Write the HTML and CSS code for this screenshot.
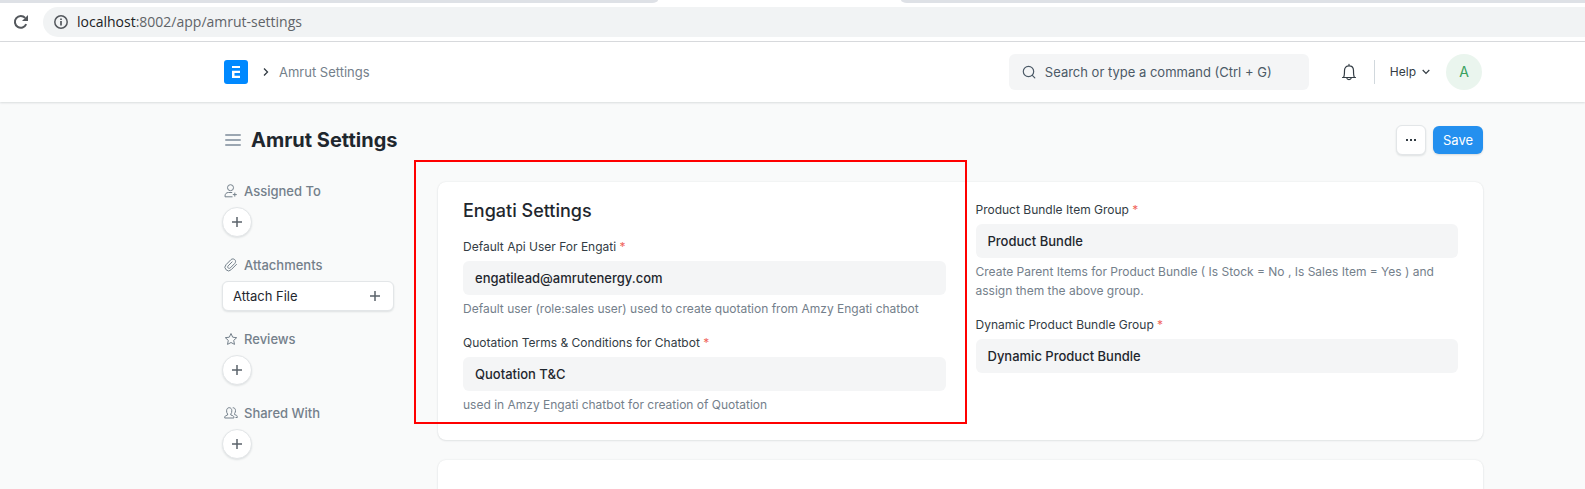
FILE: index.html
```html
<!DOCTYPE html>
<html lang="en">
<head>
<meta charset="utf-8">
<title>Amrut Settings</title>
<link rel="stylesheet" href="styles.css">
</head>
<body>
<div class="browser">
  <div class="tabs"><div class="tab-left"></div><div class="tab-right"></div></div>
  <div class="toolbar">
    <button class="reload" aria-label="Reload">
      <svg width="16" height="16" viewBox="0 0 16 16" fill="none"><path d="M13.2 10.2A5.9 5.9 0 1 1 12.2 3.9" stroke="#54585d" stroke-width="2"/><path d="M15 1v6H9z" fill="#54585d"/></svg>
    </button>
    <div class="address">
      <svg width="14" height="14" viewBox="0 0 14 14" fill="none" stroke="#54585d"><circle cx="7" cy="7" r="6.2" stroke-width="1.5"/><path d="M7 6v4.4M7 3.4v1.6" stroke-width="1.7"/></svg>
      <span class="url"><span class="host">localhost</span>:8002/app/amrut-settings</span>
    </div>
  </div>
</div>

<header class="navbar">
  <a class="logo" href="#" aria-label="Home">
    <svg width="24" height="24" viewBox="0 0 24 24"><rect width="24" height="24" rx="3" fill="#0089ff"/><path d="M8 6h8v2H8zM8 10.800h8v2.200h-5.500v2.800H16V18H8z" fill="#fff"/></svg>
  </a>
  <nav class="crumbs">
    <svg width="6" height="10" viewBox="0 0 6 10" fill="none"><path d="M1 1.500 4.500 5 1 8.500" stroke="#333c44" stroke-width="1.300"/></svg>
    <a href="#">Amrut Settings</a>
  </nav>
  <label class="search">
    <svg width="14" height="14" viewBox="0 0 14 14" fill="none" stroke="#4c5a67" stroke-width="1.200" stroke-linecap="round"><circle cx="6.500" cy="6.500" r="5.200"/><path d="m10.300 10.300 2.500 2.500"/></svg>
    <input type="text" aria-label="Search" placeholder="Search or type a command (Ctrl + G)">
  </label>
  <button class="bell" aria-label="Notifications">
    <svg width="16" height="18" viewBox="0 0 16 18" fill="none" stroke="#333c44" stroke-width="1.200" stroke-linecap="round" stroke-linejoin="round"><path d="M1.500 14.500h13M2.600 14.300c.8-1.300.9-2.500.9-6.800C3.500 4.600 5.300 2.800 8 2.800s4.500 1.800 4.500 4.700c0 4.300.1 5.500.9 6.800M8 2.600V1.400M5.600 14.700c.3 1.300 1.200 2 2.400 2s2.100-.7 2.400-2"/></svg>
  </button>
  <button class="help">Help
    <svg width="8" height="6" viewBox="0 0 8 6" fill="none"><path d="M.7 1 4 4.300 7.300 1" stroke="#333c44" stroke-width="1.200"/></svg>
  </button>
  <button class="avatar">A</button>
</header>

<div class="page">
  <div class="page-head">
    <button class="menu" aria-label="Toggle sidebar">
      <svg width="16" height="12" viewBox="0 0 16 12" stroke="#9ba6b1" stroke-width="2" stroke-linecap="round"><path d="M1 1h14M1 6h14M1 11h14"/></svg>
    </button>
    <h1>Amrut Settings</h1>
    <button class="more" aria-label="More">
      <svg width="12" height="4" viewBox="0 0 12 4" fill="#333c44"><rect x="1" y="1" width="2" height="2"/><rect x="5" y="1" width="2" height="2"/><rect x="9" y="1" width="2" height="2"/></svg>
    </button>
    <button class="save">Save</button>
  </div>

  <div class="layout">
    <aside class="sidebar">
      <section class="group">
        <h2><svg width="14" height="14" viewBox="0 0 14 14" fill="none" stroke="#74808b"><circle cx="6.500" cy="3.700" r="3"/><path d="M8.200 8.500H4.500C2.200 8.500 1 10 1 12.200v.6h7.500M10.800 8.600v4M8.800 10.600h4"/></svg>Assigned To</h2>
        <button class="round" aria-label="Assign"><svg width="10" height="10" viewBox="0 0 10 10" stroke="#5b636b" stroke-width="1.500"><path d="M5 0v10M0 5h10"/></svg></button>
      </section>
      <section class="group">
        <h2><svg width="14" height="14" viewBox="0 0 14 14" fill="none" stroke="#74808b" stroke-linecap="round"><path d="m12.500 6.400-5.300 5.300a3.500 3.500 0 0 1-5.200-5l4.800-4.900c2.700-2.500 6.400.8 4 3.600L6.300 9.900c-1.500 1.400-3.500-.5-2.200-2l4-4"/></svg>Attachments</h2>
        <button class="attach">Attach File<svg width="10" height="10" viewBox="0 0 10 10" stroke="#5b636b" stroke-width="1.500"><path d="M5 0v10M0 5h10"/></svg></button>
      </section>
      <section class="group">
        <h2><svg width="14" height="14" viewBox="0 0 14 14" fill="none" stroke="#74808b" stroke-linejoin="round"><path d="m7 1.500 1.700 3.700 4 .5-3 2.700.8 4L7 10.500l-3.500 1.900.8-4-3-2.700 4-.5z"/></svg>Reviews</h2>
        <button class="round" aria-label="Add review"><svg width="10" height="10" viewBox="0 0 10 10" stroke="#5b636b" stroke-width="1.500"><path d="M5 0v10M0 5h10"/></svg></button>
      </section>
      <section class="group">
        <h2><svg width="14" height="14" viewBox="0 0 14 14" fill="none" stroke="#74808b" stroke-linejoin="round"><path d="M3.600 8c-.8-.8-1-1.900-1-3.200 0-1.900 1-3.100 2.600-3.100s2.600 1.200 2.600 3.100c0 1.300-.2 2.400-1 3.200v1l2 .7c.9.400 1.100 1 1.100 2.300H.7c0-1.300.2-1.900 1.100-2.300l1.800-.7zM8.700 1.800c1.600-.3 2.800.9 2.800 2.800 0 1.200-.2 2-.9 2.800v1.200l1.600.6c.9.300 1.100 1 1.100 2.300h-1.800"/></svg>Shared With</h2>
        <button class="round" aria-label="Share"><svg width="10" height="10" viewBox="0 0 10 10" stroke="#5b636b" stroke-width="1.500"><path d="M5 0v10M0 5h10"/></svg></button>
      </section>
    </aside>

    <main class="main">
      <form class="card">
        <div class="column marked">
          <h3>Engati Settings</h3>
          <div class="field">
            <label for="api-user">Default Api User For Engati <span class="req">*</span></label>
            <input id="api-user" type="text" value="engatilead@amrutenergy.com">
            <p>Default user (role:sales user) used to create quotation from Amzy Engati chatbot</p>
          </div>
          <div class="field">
            <label for="terms">Quotation Terms &amp; Conditions for Chatbot <span class="req">*</span></label>
            <input id="terms" type="text" value="Quotation T&amp;C">
            <p>used in Amzy Engati chatbot for creation of Quotation</p>
          </div>
        </div>
        <div class="column side">
          <div class="field">
            <label for="item-group">Product Bundle Item Group <span class="req">*</span></label>
            <input id="item-group" type="text" value="Product Bundle">
            <p>Create Parent Items for Product Bundle ( Is Stock = No , Is Sales Item = Yes ) and assign them the above group.</p>
          </div>
          <div class="field">
            <label for="dynamic-group">Dynamic Product Bundle Group <span class="req">*</span></label>
            <input id="dynamic-group" type="text" value="Dynamic Product Bundle">
          </div>
        </div>
      </form>
      <div class="card next"></div>
    </main>
  </div>
</div>
</body>
</html>
```
FILE: styles.css
```css
* { box-sizing: border-box; }
html { height: 100%; }
body {
  margin: 0;
  min-height: 100%;
  display: flex;
  flex-direction: column;
  background: #f9fafa;
  color: #1f272e;
  font: 13px/20px Inter, "Liberation Sans", sans-serif;
}
h1, h2, h3, p { margin: 0; }
svg { display: block; flex: none; }
button {
  display: flex;
  align-items: center;
  justify-content: center;
  padding: 0;
  border: 0;
  background: none;
  color: inherit;
  font: inherit;
}
input { font: inherit; color: inherit; border: 0; outline: 0; }
a { color: inherit; text-decoration: none; }

.browser { flex: none; background: #fff; border-bottom: 1px solid #d9dbde; }
.tabs { display: flex; justify-content: space-between; height: 3px; }
.tab-left, .tab-right { background: #dee1e6; }
.tab-left { flex: 0 0 658px; border-bottom-right-radius: 6px 3px; }
.tab-right { flex: 0 1 684px; border-bottom-left-radius: 6px 3px; }
.toolbar { display: flex; align-items: center; padding: 4px 0 4px 13px; gap: 14px; }
.address {
  flex: 1;
  display: flex;
  align-items: center;
  gap: 9px;
  height: 30px;
  padding-left: 11px;
  border-radius: 15px 0 0 15px;
  background: #f1f3f4;
}
.url { font-family: "Open Sans", "Noto Sans", sans-serif; font-size: 14px; color: #5f6368; }
.host { color: #202124; }

.navbar {
  flex: none;
  display: flex;
  align-items: center;
  height: 60px;
  padding: 0 103px 0 224px;
  background: #fff;
  box-shadow: 0 1px 2px rgba(25, 39, 52, .14);
  z-index: 1;
}
.crumbs { display: flex; align-items: center; gap: 10px; margin: 0 auto 0 15px; color: #74808b; }
.search {
  display: flex;
  align-items: center;
  gap: 9px;
  width: 300px;
  height: 36px;
  padding: 0 12px 0 13px;
  border-radius: 6px;
  background: #f4f5f6;
}
.search input { flex: 1; min-width: 0; padding: 0; background: none; }
.search input::placeholder { color: #4c5a67; opacity: 1; }
.bell { margin-left: 32px; }
.help {
  gap: 6px;
  height: 24px;
  margin-left: 17px;
  padding-left: 15px;
  border-left: 1px solid #d1d8dd;
  font-size: 12px;
  color: #333c44;
}
.avatar {
  width: 36px;
  height: 36px;
  margin-left: 16px;
  border-radius: 50%;
  background: #eaf5ee;
  color: #38a160;
  font-size: 14px;
}

.page { flex: 1; display: flex; flex-direction: column; padding: 0 102px 0 222px; }
.page-head { display: flex; align-items: center; height: 76px; padding-left: 3px; gap: 7px; }
.page-head h1 { flex: 1; margin-left: 3px; font-size: 20px; line-height: 30px; font-weight: 700; }
.more, .round, .attach {
  background: #fff;
  border: 1px solid #e3e6e8;
  box-shadow: 0 1px 2px rgba(25, 39, 52, .12);
}
.more { width: 30px; height: 30px; border-radius: 6px; }
.save {
  width: 50px;
  height: 28px;
  border-radius: 6px;
  background: #2490ef;
  color: #fff;
  box-shadow: 0 1px 2px rgba(25, 39, 52, .15);
}

.layout { flex: 1; display: flex; gap: 44px; padding-top: 4px; }
.sidebar { flex: 0 0 172px; display: flex; flex-direction: column; gap: 18px; margin-top: -1px; }
.group { display: flex; flex-direction: column; gap: 6px; }
.group h2 {
  display: flex;
  align-items: center;
  gap: 6px;
  padding-left: 2px;
  font-size: 13px;
  line-height: 20px;
  font-weight: 500;
  color: #74808b;
}
.round { width: 30px; height: 30px; border-radius: 50%; }
.attach { height: 30px; justify-content: space-between; padding: 0 13px 0 10px; border-radius: 6px; }

.main { flex: 1; min-width: 0; display: flex; flex-direction: column; gap: 20px; }
.card {
  display: grid;
  grid-template-columns: 1fr 1fr;
  gap: 30px;
  padding: 18px 25px 26px;
  border-radius: 8px;
  background: #fff;
  box-shadow: 0 0 2px rgba(25, 39, 52, .1), 0 1px 2px rgba(25, 39, 52, .08);
}
.next { flex: 1; padding: 0; border-radius: 8px 8px 0 0; }
.column { display: flex; flex-direction: column; gap: 16px; }
.side { padding-top: 1px; }
.column h3 { font-size: 18px; line-height: 22px; font-weight: 500; }
.marked { position: relative; }
.marked::after {
  content: "";
  position: absolute;
  inset: -40px -21px -10px -49px;
  border: 2px solid #f00;
  pointer-events: none;
}
.field { display: flex; flex-direction: column; font-size: 12px; }
.field label { margin-bottom: 5px; line-height: 18px; color: #333c44; }
.req { color: #f0665c; }
.field input {
  height: 34px;
  padding: 0 12px;
  border-radius: 6px;
  background: #f4f5f6;
  font-size: 13px;
  font-weight: 500;
}
.field p { margin-top: 4px; line-height: 19px; color: #74808b; }
```
